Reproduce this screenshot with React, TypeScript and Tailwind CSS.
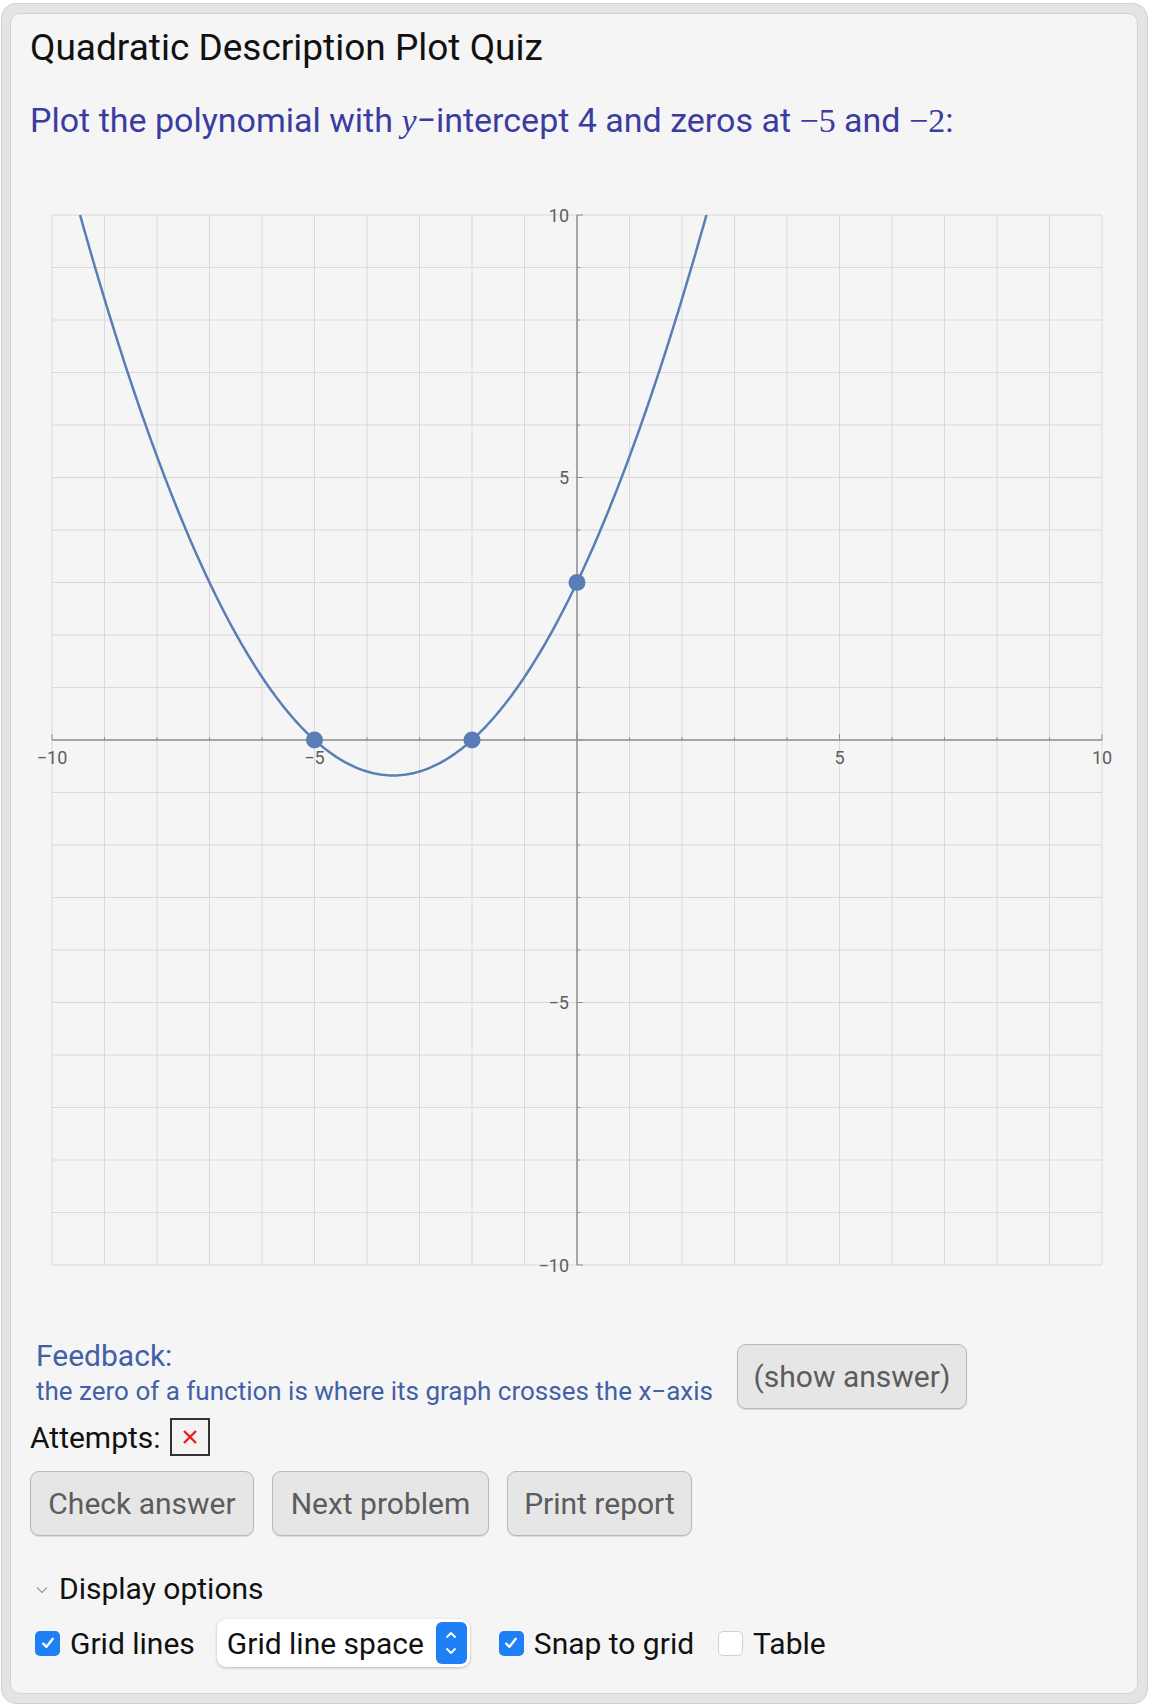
import React from "react";

const U = 52.5;
const GX = 41;
const GY = 24;

const px = (x: number) => GX + (x + 10) * U;
const py = (y: number) => GY + (10 - y) * U;

function curvePath() {
  const f = (x: number) => 0.3 * (x + 5) * (x + 2);
  const x0 = (-7 - Math.sqrt(49 + 4 * (10 / 0.3 - 10))) / 2;
  const x1 = (-7 + Math.sqrt(49 + 4 * (10 / 0.3 - 10))) / 2;
  const pts: string[] = [];
  const n = 240;
  for (let i = 0; i <= n; i++) {
    const x = x0 + ((x1 - x0) * i) / n;
    pts.push(`${px(x).toFixed(2)},${py(f(x)).toFixed(2)}`);
  }
  return "M" + pts.join(" L");
}

function Plot() {
  const lines = Array.from({ length: 21 }, (_, i) => i);
  return (
    <svg width={1126} height={1100} viewBox="0 0 1126 1100" className="block">
      {lines.map((i) => (
        <line key={"v" + i} x1={GX + i * U} y1={GY} x2={GX + i * U} y2={GY + 20 * U} stroke="#d9d9d9" strokeWidth={1} />
      ))}
      {lines.map((i) => (
        <line key={"h" + i} x1={GX} y1={GY + i * U} x2={GX + 20 * U} y2={GY + i * U} stroke="#d9d9d9" strokeWidth={1} />
      ))}
      {/* axes */}
      <line x1={px(0)} y1={GY} x2={px(0)} y2={GY + 20 * U} stroke="#8f8f8f" strokeWidth={1.5} />
      <line x1={GX} y1={py(0)} x2={GX + 20 * U} y2={py(0)} stroke="#8f8f8f" strokeWidth={1.5} />
      {lines.map((i) => {
        const major = (i - 10) % 5 === 0;
        return (
          <g key={"t" + i}>
            <line x1={px(0)} y1={GY + i * U} x2={px(0) + (major ? 6 : 3)} y2={GY + i * U} stroke="#8f8f8f" strokeWidth={1} />
            <line x1={GX + i * U} y1={py(0)} x2={GX + i * U} y2={py(0) - (major ? 6 : 3)} stroke="#8f8f8f" strokeWidth={1} />
          </g>
        );
      })}
      <g fill="#5e5e5e" fontSize={18} fontFamily="Roboto, 'Liberation Sans', sans-serif">
        <text x={px(0) - 8} y={py(10)} textAnchor="end" dominantBaseline="central">10</text>
        <text x={px(0) - 8} y={py(5)} textAnchor="end" dominantBaseline="central">5</text>
        <text x={px(0) - 8} y={py(-5)} textAnchor="end" dominantBaseline="central">−5</text>
        <text x={px(0) - 8} y={py(-10)} textAnchor="end" dominantBaseline="central">−10</text>
        <text x={px(-10)} y={py(0) + 17} textAnchor="middle" dominantBaseline="central">−10</text>
        <text x={px(-5)} y={py(0) + 17} textAnchor="middle" dominantBaseline="central">−5</text>
        <text x={px(5)} y={py(0) + 17} textAnchor="middle" dominantBaseline="central">5</text>
        <text x={px(10)} y={py(0) + 17} textAnchor="middle" dominantBaseline="central">10</text>
      </g>
      <path d={curvePath()} fill="none" stroke="#5a7db6" strokeWidth={2.5} strokeLinejoin="round" />
      <circle cx={px(-5)} cy={py(0)} r={8.5} fill="#5a7db6" />
      <circle cx={px(-2)} cy={py(0)} r={8.5} fill="#5a7db6" />
      <circle cx={px(0)} cy={py(3)} r={8.5} fill="#5a7db6" />
    </svg>
  );
}

function CheckBox({ checked }: { checked: boolean }) {
  if (!checked) {
    return <span className="inline-block h-[25px] w-[25px] rounded-[5px] border border-[#d0d0d0] bg-white align-middle" />;
  }
  return (
    <span className="inline-flex h-[25px] w-[25px] items-center justify-center rounded-[5px] bg-[#1f7ff5] align-middle">
      <svg width="16" height="16" viewBox="0 0 16 16">
        <path d="M3.2 8.6 L6.5 11.8 L12.8 3.8" fill="none" stroke="white" strokeWidth={2.3} strokeLinecap="round" strokeLinejoin="round" />
      </svg>
    </span>
  );
}

const btn =
  "h-[65px] rounded-[9px] border border-[#b9b9b9] bg-[#e6e6e6] text-[30px] text-[#5c5c5c] shadow-[0_1px_1px_rgba(0,0,0,0.12)]";

export default function App() {
  return (
    <div className="min-h-[1706px] bg-white pt-[3px] pl-[1px]" style={{ fontFamily: "Roboto, 'Liberation Sans', sans-serif" }}>
      <div className="w-[1147px] rounded-[15px] border border-[#d0d0d0] bg-[#e4e4e4] pt-[9px] pb-[9px] pl-[8px] pr-[9px]">
        <div className="h-[1681px] rounded-[10px] border border-[#d2d2d2] bg-[#f5f5f5]">
          <div className="px-[19px] pt-[12px]">
            <h1 className="text-[37px] leading-[44px] text-[#111]">Quadratic Description Plot Quiz</h1>
            <p className="mt-[30px] whitespace-nowrap text-[34px] leading-[40px] text-[#3c3ca0]">
              Plot the polynomial with{" "}
              <span className="italic" style={{ fontFamily: "'Liberation Serif', serif" }}>y</span>−intercept 4 and zeros at{" "}
              <span style={{ fontFamily: "'Liberation Serif', serif" }}>−5</span> and{" "}
              <span style={{ fontFamily: "'Liberation Serif', serif" }}>−2</span>:
            </p>
          </div>
          <div className="mt-[50px]">
            <Plot />
          </div>
          <div className="px-[19px]">
            <div className="mt-[48px] flex items-end gap-[24px]">
              <div className="ml-[6px] text-[#4160a8]">
                <div className="text-[30px] leading-[34px]">Feedback:</div>
                <div className="whitespace-nowrap text-[26px] leading-[36px]">the zero of a function is where its graph crosses the x−axis</div>
              </div>
              <button className={btn + " w-[230px]"}>(show answer)</button>
            </div>
            <div className="mt-[8px] flex h-[40px] items-center gap-[9px]">
              <span className="text-[30px] text-[#111]">Attempts:</span>
              <span className="flex h-[38px] w-[40px] items-center justify-center border-2 border-[#333] bg-[#f3f3f3]">
                <svg width="16" height="16" viewBox="0 0 16 16">
                  <path d="M2 2 L14 14 M14 2 L2 14" stroke="#f01c1c" strokeWidth={2.4} />
                </svg>
              </span>
            </div>
            <div className="mt-[14px] flex gap-[18px]">
              <button className={btn + " w-[224px]"}>Check answer</button>
              <button className={btn + " w-[217px]"}>Next problem</button>
              <button className={btn + " w-[185px]"}>Print report</button>
            </div>
            <div className="mt-[34px] flex h-[36px] items-center">
              <svg width="12" height="8" viewBox="0 0 12 8" className="ml-[6px] mr-[11px] mt-[4px]">
                <path d="M1 1.5 L6 6.5 L11 1.5" fill="none" stroke="#a0a0a0" strokeWidth={1.3} />
              </svg>
              <span className="text-[30px] text-[#111]">Display options</span>
            </div>
            <div className="mt-[13px] flex h-[48px] items-center whitespace-nowrap">
              <span className="ml-[5px] flex"><CheckBox checked /></span>
              <span className="ml-[10px] text-[30px] text-[#111]">Grid lines</span>
              <span className="ml-[22px] flex h-[48px] w-[253px] items-center justify-between rounded-[9px] bg-white pl-[10px] pr-[3px] shadow-[0_1px_3px_rgba(0,0,0,0.25)]">
                <span className="text-[30px] text-[#111]">Grid line space</span>
                <span className="flex h-[42px] w-[31px] flex-col items-center justify-center gap-[8px] rounded-[6px] bg-[#1f7ff5]">
                  <svg width="12" height="8" viewBox="0 0 12 8">
                    <path d="M2 6 L6 2 L10 6" fill="none" stroke="white" strokeWidth={1.8} strokeLinecap="round" strokeLinejoin="round" />
                  </svg>
                  <svg width="12" height="8" viewBox="0 0 12 8">
                    <path d="M2 2 L6 6 L10 2" fill="none" stroke="white" strokeWidth={1.8} strokeLinecap="round" strokeLinejoin="round" />
                  </svg>
                </span>
              </span>
              <span className="ml-[29px] flex"><CheckBox checked /></span>
              <span className="ml-[10px] text-[30px] text-[#111]">Snap to grid</span>
              <span className="ml-[24px] flex"><CheckBox checked={false} /></span>
              <span className="ml-[10px] text-[30px] text-[#111]">Table</span>
            </div>
          </div>
        </div>
      </div>
    </div>
  );
}
